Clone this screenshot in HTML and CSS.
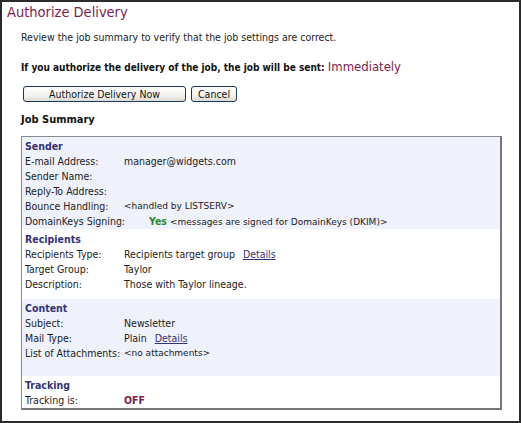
FILE: index.html
```html
<!DOCTYPE html>
<html lang="en">
<head>
<meta charset="UTF-8">
<meta name="viewport" content="width=device-width, initial-scale=1.0">
<title>Authorize Delivery</title>
<link rel="stylesheet" href="styles.css">
</head>
<body>
<div class="frame">
  <h1 class="page-title">Authorize Delivery</h1>
  <div class="content">
    <p class="intro">Review the job summary to verify that the job settings are correct.</p>
    <p class="notice">If you authorize the delivery of the job, the job will be sent: <span class="when">Immediately</span></p>
    <div class="actions">
      <button class="btn btn-wide">Authorize Delivery Now</button>
      <button class="btn">Cancel</button>
    </div>
    <h2 class="summary-title">Job Summary</h2>

    <div class="summary">
      <div class="section section-sender">
        <div class="section-head">Sender</div>
        <div class="row"><span class="label">E-mail Address:</span><span class="value">manager@widgets.com</span></div>
        <div class="row"><span class="label">Sender Name:</span><span class="value"></span></div>
        <div class="row"><span class="label">Reply-To Address:</span><span class="value"></span></div>
        <div class="row"><span class="label">Bounce Handling:</span><span class="value small">&lt;handled by LISTSERV&gt;</span></div>
        <div class="row"><span class="label">DomainKeys Signing:</span><span class="value"><b class="yes">Yes</b> <span class="small">&lt;messages are signed for DomainKeys (DKIM)&gt;</span></span></div>
      </div>

      <div class="section section-recipients">
        <div class="section-head">Recipients</div>
        <div class="row"><span class="label">Recipients Type:</span><span class="value">Recipients target group <a href="#" class="details">Details</a></span></div>
        <div class="row"><span class="label">Target Group:</span><span class="value">Taylor</span></div>
        <div class="row"><span class="label">Description:</span><span class="value">Those with Taylor lineage.</span></div>
      </div>

      <div class="section section-content">
        <div class="section-head">Content</div>
        <div class="row"><span class="label">Subject:</span><span class="value">Newsletter</span></div>
        <div class="row"><span class="label">Mail Type:</span><span class="value">Plain <a href="#" class="details">Details</a></span></div>
        <div class="row"><span class="label">List of Attachments:</span><span class="value small">&lt;no attachments&gt;</span></div>
      </div>

      <div class="section section-tracking">
        <div class="section-head">Tracking</div>
        <div class="row"><span class="label">Tracking is:</span><span class="value"><b class="off">OFF</b></span></div>
      </div>
    </div>
  </div>
</div>
</body>
</html>
```

FILE: styles.css
```css
html, body {
  margin: 0;
  padding: 0;
  background: #fff;
}
body {
  font-family: 'DejaVu Sans Condensed', 'DejaVu Sans', Verdana, sans-serif;
  font-size: 10.5px;
  color: #222;
}
.frame {
  box-sizing: border-box;
  width: 521px;
  height: 423px;
  border: 2px solid #2b2b2b;
  background: #fff;
  overflow: hidden;
}
.page-title {
  margin: 0;
  padding: 1px 0 0 5px;
  font-size: 14.5px;
  line-height: 18px;
  font-weight: normal;
  color: #7d1d4c;
}
.content {
  padding-left: 19px;
}
.intro {
  margin: 0;
  padding-top: 9px;
  line-height: 15px;
}
.notice {
  margin: 0;
  padding-top: 14px;
  line-height: 15px;
  font-weight: bold;
  font-size: 10px;
  color: #111;
}
.when {
  font-size: 13px;
  font-weight: normal;
  color: #7d1d4c;
}
.actions {
  display: flex;
  gap: 5px;
  padding: 11px 0 0 2px;
}
.btn {
  box-sizing: border-box;
  height: 16px;
  padding: 0 6px;
  font-family: inherit;
  font-size: 10.5px;
  line-height: 13px;
  color: #111;
  border: 1px solid #1c3766;
  border-radius: 3px;
  background: linear-gradient(#ffffff, #f3f2ec 60%, #dcdbd2);
}
.btn-wide {
  width: 163px;
}
.summary-title {
  margin: 0;
  padding-top: 10px;
  font-size: 11px;
  line-height: 15px;
  color: #111;
}
.summary {
  margin-top: 9px;
  width: 478px;
  border: 1px solid #8a8a8a;
  border-right: 2px solid #777;
  border-bottom: 2px solid #777;
}
.section {
  padding: 1px 0 0 3px;
}
.section-sender,
.section-content {
  background: #eff1fb;
}
.section-recipients {
  padding-top: 2px;
  padding-bottom: 7px;
}
.section-content {
  padding-bottom: 15px;
}
.section-head {
  height: 16px;
  line-height: 16px;
  font-weight: bold;
  font-size: 10.5px;
  color: #333372;
}
.row {
  display: flex;
  height: 15px;
  line-height: 15px;
  white-space: nowrap;
}
.label {
  width: 99px;
  flex-shrink: 0;
}
.small {
  font-family: 'DejaVu Sans', Verdana, sans-serif;
  font-size: 9px;
}
.yes {
  color: #2b8a2b;
  margin-left: 25px;
}
.off {
  color: #7d1d4c;
}
.details {
  color: #333377;
  margin-left: 5px;
}
```
